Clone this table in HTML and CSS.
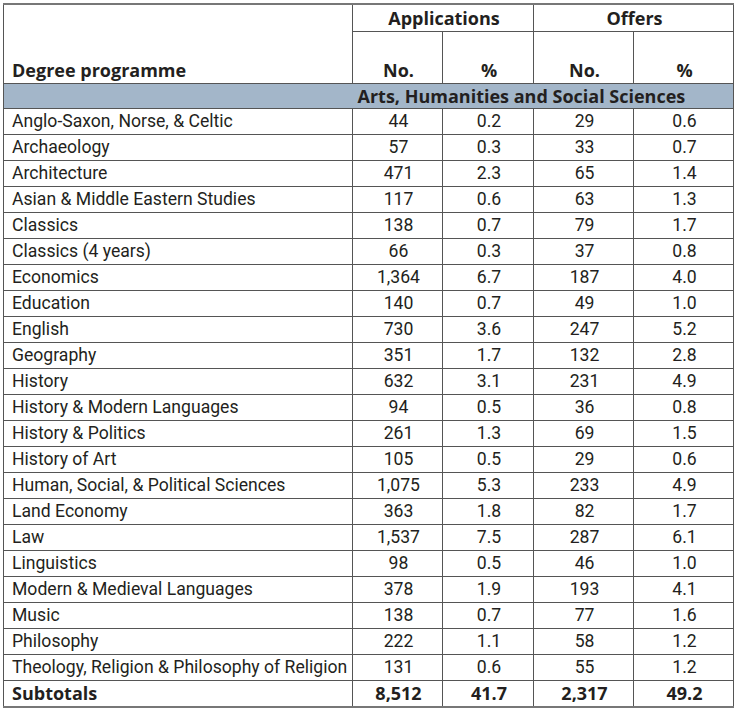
FILE: index.html
```html
<!DOCTYPE html>
<html>
<head>
<meta charset="utf-8">
<link rel="stylesheet" href="styles.css">
</head>
<body>
<table class="t">
  <colgroup>
    <col class="c-name"><col class="c-a1"><col class="c-a2"><col class="c-o1"><col class="c-o2">
  </colgroup>
  <thead>
    <tr class="h1">
      <th rowspan="2" class="name">Degree programme</th>
      <th colspan="2">Applications</th>
      <th colspan="2">Offers</th>
    </tr>
    <tr class="h2">
      <th>No.</th><th>%</th><th>No.</th><th>%</th>
    </tr>
  </thead>
  <tbody>
    <tr class="band"><td class="band-l"></td><td colspan="4" class="band-r">Arts, Humanities and Social Sciences</td></tr>
    <tr><td>Anglo-Saxon, Norse, &amp; Celtic</td><td>44</td><td>0.2</td><td>29</td><td>0.6</td></tr>
    <tr><td>Archaeology</td><td>57</td><td>0.3</td><td>33</td><td>0.7</td></tr>
    <tr><td>Architecture</td><td>471</td><td>2.3</td><td>65</td><td>1.4</td></tr>
    <tr><td>Asian &amp; Middle Eastern Studies</td><td>117</td><td>0.6</td><td>63</td><td>1.3</td></tr>
    <tr><td>Classics</td><td>138</td><td>0.7</td><td>79</td><td>1.7</td></tr>
    <tr><td>Classics (4 years)</td><td>66</td><td>0.3</td><td>37</td><td>0.8</td></tr>
    <tr><td>Economics</td><td>1,364</td><td>6.7</td><td>187</td><td>4.0</td></tr>
    <tr><td>Education</td><td>140</td><td>0.7</td><td>49</td><td>1.0</td></tr>
    <tr><td>English</td><td>730</td><td>3.6</td><td>247</td><td>5.2</td></tr>
    <tr><td>Geography</td><td>351</td><td>1.7</td><td>132</td><td>2.8</td></tr>
    <tr><td>History</td><td>632</td><td>3.1</td><td>231</td><td>4.9</td></tr>
    <tr><td>History &amp; Modern Languages</td><td>94</td><td>0.5</td><td>36</td><td>0.8</td></tr>
    <tr><td>History &amp; Politics</td><td>261</td><td>1.3</td><td>69</td><td>1.5</td></tr>
    <tr><td>History of Art</td><td>105</td><td>0.5</td><td>29</td><td>0.6</td></tr>
    <tr><td>Human, Social, &amp; Political Sciences</td><td>1,075</td><td>5.3</td><td>233</td><td>4.9</td></tr>
    <tr><td>Land Economy</td><td>363</td><td>1.8</td><td>82</td><td>1.7</td></tr>
    <tr><td>Law</td><td>1,537</td><td>7.5</td><td>287</td><td>6.1</td></tr>
    <tr><td>Linguistics</td><td>98</td><td>0.5</td><td>46</td><td>1.0</td></tr>
    <tr><td>Modern &amp; Medieval Languages</td><td>378</td><td>1.9</td><td>193</td><td>4.1</td></tr>
    <tr><td>Music</td><td>138</td><td>0.7</td><td>77</td><td>1.6</td></tr>
    <tr><td>Philosophy</td><td>222</td><td>1.1</td><td>58</td><td>1.2</td></tr>
    <tr><td>Theology, Religion &amp; Philosophy of Religion</td><td>131</td><td>0.6</td><td>55</td><td>1.2</td></tr>
    <tr class="sub"><td>Subtotals</td><td>8,512</td><td>41.7</td><td>2,317</td><td>49.2</td></tr>
  </tbody>
</table>
</body>
</html>
```
FILE: styles.css
```css
html, body {
  margin: 0;
  padding: 0;
  background: #ffffff;
}
body {
  padding: 3px 0 0 3px;
  font-family: Roboto, "Liberation Sans", Arial, sans-serif;
  color: #231f20;
}
.t {
  border-collapse: collapse;
  table-layout: fixed;
  width: 730px;
  font-size: 17.6px;
}
.c-name { width: 349px; }
.c-a1 { width: 90px; }
.c-a2 { width: 91px; }
.c-o1 { width: 100px; }
.c-o2 { width: 100px; }
.t th, .t td {
  border: 1px solid #555555;
  padding: 0 4px 0 6px;
  text-align: center;
  white-space: nowrap;
  overflow: hidden;
}
.t thead tr:first-child th {
  border-top: 2px solid #777777;
}
.t th,
.band td,
.sub td {
  font-family: "Open Sans", Roboto, sans-serif;
  font-weight: 700;
  font-size: 18px;
}
.h1 th {
  height: 26px;
  line-height: 24px;
  vertical-align: middle;
}
.h2 th {
  height: 50px;
  line-height: 24px;
  vertical-align: bottom;
  padding-bottom: 1px;
}
.t th.name {
  text-align: left;
  vertical-align: bottom;
  padding-left: 8px;
  padding-bottom: 1px;
}
.t td {
  height: 25px;
  line-height: 25px;
}
.t td:first-child {
  text-align: left;
  padding-left: 8px;
}
.band td {
  background: #a3b6c9;
  height: 24px;
  line-height: 24px;
}
.t .band-l {
  border-right: none;
}
.t .band-r {
  border-left: none;
  text-align: left;
  padding-left: 5px;
}
.sub td {
  border-bottom: 2px solid #777777;
}
```
